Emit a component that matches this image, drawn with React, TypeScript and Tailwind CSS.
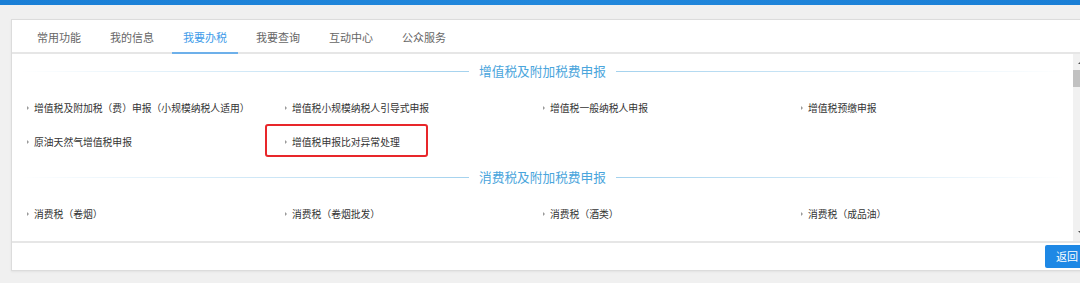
import React from "react";

const tabs = ["常用功能", "我的信息", "我要办税", "我要查询", "互动中心", "公众服务"];

const vat = [
  "增值税及附加税（费）申报（小规模纳税人适用）",
  "增值税小规模纳税人引导式申报",
  "增值税一般纳税人申报",
  "增值税预缴申报",
  "原油天然气增值税申报",
  "增值税申报比对异常处理",
];

const consumption = ["消费税（卷烟）", "消费税（卷烟批发）", "消费税（酒类）", "消费税（成品油）"];

export default function App() {
  return (
    <div
      className="w-[1080px] h-[283px] overflow-hidden bg-[#f0f0f0]"
      style={{ fontFamily: '"Noto Sans CJK SC", "Noto Sans", sans-serif' }}
    >
      <div className="h-[5px] bg-gradient-to-r from-[#1a7fd6] via-[#2288dc] to-[#1a7fd6]" />

      <div className="mt-[14px] ml-[11px] w-[1080px] bg-white border border-[#dcdcdc] shadow-[0_1px_2px_rgba(0,0,0,0.06)]">
        {/* Tabs */}
        <div className="h-[34px] flex pl-[14px] gap-[7px] border-b-2 border-[#e6e6e6]">
          {tabs.map((t) => (
            <Tab key={t} label={t} active={t === "我要办税"} />
          ))}
        </div>

        {/* Content */}
        <div className="h-[187px] flex">
          <div className="flex-1 pt-[8px]">
            <SectionTitle title="增值税及附加税费申报" />
            <div className="mt-[11px] grid grid-cols-[repeat(4,258px)] pl-[10px]">
              {vat.map((v, i) => (
                <Item key={v} label={v} highlight={i === 5} />
              ))}
            </div>
            <div className="mt-[9px]">
              <SectionTitle title="消费税及附加税费申报" />
            </div>
            <div className="mt-[11px] grid grid-cols-[repeat(4,258px)] pl-[10px]">
              {consumption.map((v) => (
                <Item key={v} label={v} />
              ))}
            </div>
          </div>

          {/* Scrollbar */}
          <div className="w-[17px] bg-[#f1f1f1] flex flex-col items-center">
            <div className="h-[16px] flex items-center justify-center">
              <div className="w-0 h-0 border-x-[4px] border-x-transparent border-b-[4px] border-b-[#505050]" />
            </div>
            <div className="w-full h-[17px] bg-[#c1c1c1]" />
            <div className="flex-1" />
            <div className="h-[16px] flex items-center justify-center">
              <div className="w-0 h-0 border-x-[4px] border-x-transparent border-t-[4px] border-t-[#505050]" />
            </div>
          </div>
        </div>

        {/* Footer */}
        <div className="h-[29px] border-t-2 border-[#e6e6e6] flex items-center justify-end pr-[1px]">
          <button className="w-[44px] h-[23px] bg-[#1e88e5] rounded-[2px] text-white text-[11px] leading-none">
            返回
          </button>
        </div>
      </div>
    </div>
  );
}

function Tab({ label, active }: { label: string; active?: boolean }) {
  return (
    <div
      className={
        "relative px-[11px] pt-[2px] flex items-center text-[11px] " +
        (active ? "text-[#3d9be9]" : "text-[#666666]")
      }
    >
      {label}
      {active && <div className="absolute left-0 right-0 bottom-[-2px] h-[2px] bg-[#6db0ea]" />}
    </div>
  );
}

function SectionTitle({ title }: { title: string }) {
  return (
    <div className="h-[18px] flex items-center px-[8px]">
      <div className="flex-1 h-px bg-gradient-to-r from-white to-[#a4d2ee]" />
      <div className="px-[10px] text-[12.7px] text-[#4aa5dc] leading-none">{title}</div>
      <div className="flex-1 h-px bg-gradient-to-r from-[#a4d2ee] to-white" />
    </div>
  );
}

function Item({ label, highlight }: { label: string; highlight?: boolean }) {
  return (
    <div className="relative h-[34px] flex items-center">
      <span className="w-[12px] shrink-0 pl-[5px] flex items-center">
        <span className="w-0 h-0 border-y-[2px] border-y-transparent border-l-[2px] border-l-[#9a9a9a]" />
      </span>
      <span className="text-[9.8px] text-[#333333] whitespace-nowrap">{label}</span>
      {highlight && (
        <div className="absolute left-[-15px] top-[-1px] w-[163px] h-[33px] border-2 border-[#e8262a] rounded-[3px]" />
      )}
    </div>
  );
}
